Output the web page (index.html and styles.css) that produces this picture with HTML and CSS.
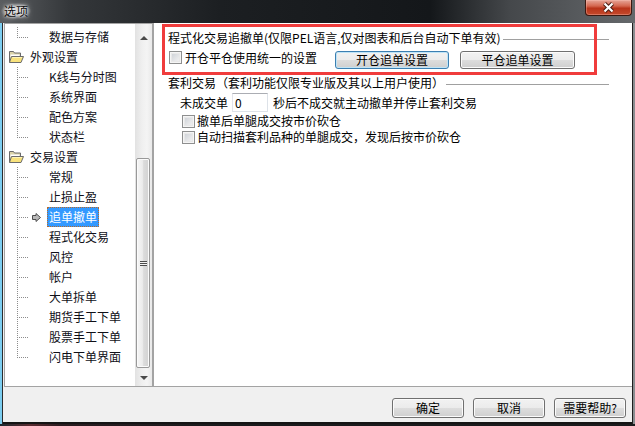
FILE: index.html
```html
<!DOCTYPE html>
<html lang="zh-CN">
<head>
    <meta charset="UTF-8">
    <meta name="viewport" content="width=device-width, initial-scale=1.0">
    <title>选项</title>
    <link rel="stylesheet" href="styles.css">
</head>
<body>
    <div class="window">
        <div class="titlebar">
            <span class="title">选项</span>
            <span class="close">
                <svg width="13" height="11" viewBox="0 0 13 11">
                    <path d="M2.5 1.5 L10.5 9.5 M10.5 1.5 L2.5 9.5" stroke="#4a1c12" stroke-width="4.2"/>
                    <path d="M2.5 1.5 L10.5 9.5 M10.5 1.5 L2.5 9.5" stroke="#fff" stroke-width="2.2"/>
                </svg>
            </span>
        </div>

        <div class="frame">
            <div class="main">
                <div class="tree">
                    <ul class="nodes">
                        <li class="node child"><span class="conn last"></span><span class="slot"></span><span class="label">数据与存储</span></li>
                        <li class="node parent">
                            <svg class="folder" viewBox="0 0 16 16" width="16" height="16">
                                <path d="M1.5 2.5h4l1 1.5h6v9h-11z" fill="#d9d2a8" stroke="#6b6b6b"/>
                                <path d="M2.5 5.5h9v3h-9z" fill="#fff"/>
                                <path d="M3.5 7.5h12l-2.5 6h-11.5z" fill="#f8e27c" stroke="#6b6b6b"/>
                                <path d="M4.5 8.5h9.5" stroke="#fdf3b8"/>
                            </svg>
                            <span class="label">外观设置</span>
                        </li>
                        <li class="node child"><span class="conn"></span><span class="slot"></span><span class="label">K线与分时图</span></li>
                        <li class="node child"><span class="conn"></span><span class="slot"></span><span class="label">系统界面</span></li>
                        <li class="node child"><span class="conn"></span><span class="slot"></span><span class="label">配色方案</span></li>
                        <li class="node child"><span class="conn last"></span><span class="slot"></span><span class="label">状态栏</span></li>
                        <li class="node parent">
                            <svg class="folder" viewBox="0 0 16 16" width="16" height="16">
                                <path d="M1.5 2.5h4l1 1.5h6v9h-11z" fill="#d9d2a8" stroke="#6b6b6b"/>
                                <path d="M2.5 5.5h9v3h-9z" fill="#fff"/>
                                <path d="M3.5 7.5h12l-2.5 6h-11.5z" fill="#f8e27c" stroke="#6b6b6b"/>
                                <path d="M4.5 8.5h9.5" stroke="#fdf3b8"/>
                            </svg>
                            <span class="label">交易设置</span>
                        </li>
                        <li class="node child"><span class="conn"></span><span class="slot"></span><span class="label">常规</span></li>
                        <li class="node child"><span class="conn"></span><span class="slot"></span><span class="label">止损止盈</span></li>
                        <li class="node child selected">
                            <span class="conn"></span>
                            <span class="slot">
                                <svg width="9" height="9" viewBox="0 0 9 9">
                                    <path d="M0.5 2.5h3.5v-2l4.5 4-4.5 4v-2h-3.5z" fill="#b9b9b9" stroke="#4d4d4d"/>
                                </svg>
                            </span>
                            <span class="label">追单撤单</span>
                        </li>
                        <li class="node child"><span class="conn"></span><span class="slot"></span><span class="label">程式化交易</span></li>
                        <li class="node child"><span class="conn"></span><span class="slot"></span><span class="label">风控</span></li>
                        <li class="node child"><span class="conn"></span><span class="slot"></span><span class="label">帐户</span></li>
                        <li class="node child"><span class="conn"></span><span class="slot"></span><span class="label">大单拆单</span></li>
                        <li class="node child"><span class="conn"></span><span class="slot"></span><span class="label">期货手工下单</span></li>
                        <li class="node child"><span class="conn"></span><span class="slot"></span><span class="label">股票手工下单</span></li>
                        <li class="node child"><span class="conn last"></span><span class="slot"></span><span class="label">闪电下单界面</span></li>
                    </ul>
                    <div class="vscroll">
                        <div class="sb-up"><span class="tri up"></span></div>
                        <div class="sb-track">
                            <div class="sb-thumb"><span class="grip"></span></div>
                        </div>
                        <div class="sb-down"><span class="tri down"></span></div>
                    </div>
                </div>

                <div class="panel">
                    <div class="group-title">
                        <span>程式化交易追撤单(仅限PEL语言,仅对图表和后台自动下单有效)</span>
                        <i class="rule"></i>
                    </div>
                    <div class="sync-row">
                        <span class="check"></span>
                        <span class="check-text">开仓平仓使用统一的设置</span>
                        <button class="btn focused open-btn">开仓追单设置</button>
                        <button class="btn close-btn">平仓追单设置</button>
                    </div>

                    <div class="group-title second">
                        <span>套利交易（套利功能仅限专业版及其以上用户使用）</span>
                        <i class="rule"></i>
                    </div>
                    <div class="wait-row">
                        <span>未成交单</span>
                        <input class="num" type="text" value="0">
                        <span class="after">秒后不成交就主动撤单并停止套利交易</span>
                    </div>
                    <div class="opt first">
                        <span class="check"></span>
                        <span class="opt-text">撤单后单腿成交按市价砍仓</span>
                    </div>
                    <div class="opt">
                        <span class="check"></span>
                        <span class="opt-text">自动扫描套利品种的单腿成交，发现后按市价砍仓</span>
                    </div>

                    <div class="mark"></div>
                </div>
            </div>

            <div class="footer">
                <button class="btn">确定</button>
                <button class="btn">取消</button>
                <button class="btn">需要帮助?</button>
            </div>
        </div>
    </div>
</body>
</html>
```

FILE: styles.css
```css
* {
    box-sizing: border-box;
}

html,
body {
    margin: 0;
}

body {
    width: 635px;
    height: 426px;
    overflow: hidden;
    background: linear-gradient(to right, #1c2a30 0, #5a2a30 30px, #2a1c20 60px, #1b1b1d 200px);
    font-family: "Noto Sans CJK SC", "Liberation Sans", sans-serif;
    font-size: 12px;
    line-height: 16px;
    color: #000;
}

.window {
    width: 635px;
    height: 424px;
    display: flex;
    flex-direction: column;
}

/* title bar */
.titlebar {
    height: 23px;
    flex: none;
    display: flex;
    justify-content: space-between;
    align-items: flex-start;
    background: linear-gradient(to right, #5a5d60 0, #34373a 70px, #1c1f22 220px, #14171a 430px, #45484b 510px, #65686b 100%);
}

.title {
    margin: 3px 0 0 1px;
    padding: 0 3px;
    line-height: 16px;
    color: #0c0c0c;
    background: radial-gradient(ellipse at center, rgba(230, 230, 230, 0.75) 30%, rgba(200, 200, 200, 0) 72%);
    text-shadow: 0 0 3px #fff, 0 0 6px #fff;
}

.close {
    width: 47px;
    height: 16px;
    margin-right: 3px;
    display: flex;
    justify-content: center;
    align-items: center;
    border: 1px solid #3c1810;
    border-top: none;
    border-radius: 0 0 4px 4px;
    background: linear-gradient(#e6a698 0, #d4674f 40%, #b8341a 55%, #c44a2c 100%);
    box-shadow: inset 0 0 0 1px rgba(255, 200, 190, 0.35);
}

/* dialog body */
.frame {
    flex: 1;
    display: flex;
    flex-direction: column;
    padding: 0 3px 2px 3px;
    background: #f0f0f0;
    box-shadow: inset 2px 0 #7ccdf0, inset 3px 0 #2a2c2e, inset -2px 0 #8a8d90, inset -3px 0 #1e1e1e, inset 0 -2px #151515;
}

.main {
    height: 364px;
    display: flex;
}

/* tree */
.tree {
    width: 149px;
    margin-left: 1px;
    display: flex;
    border: 1px solid #a3a3a3;
    background: #fff;
}

.nodes {
    flex: 1;
    list-style: none;
    margin: 0;
    padding: 3px 0 0;
    overflow: hidden;
}

.node {
    height: 20px;
    display: flex;
    align-items: center;
    white-space: nowrap;
}

.parent {
    padding-left: 3px;
}

.folder {
    flex: none;
    margin-right: 4px;
}

.conn {
    flex: none;
    width: 12px;
    height: 20px;
    margin-left: 12px;
    background:
        repeating-linear-gradient(to right, #8c8c8c 0 1px, transparent 1px 2px) 0 10px / 12px 1px no-repeat,
        repeating-linear-gradient(to bottom, #8c8c8c 0 1px, transparent 1px 2px) 0 0 / 1px 20px no-repeat;
}

.conn.last {
    background:
        repeating-linear-gradient(to right, #8c8c8c 0 1px, transparent 1px 2px) 0 10px / 12px 1px no-repeat,
        repeating-linear-gradient(to bottom, #8c8c8c 0 1px, transparent 1px 2px) 0 0 / 1px 11px no-repeat;
}

.slot {
    flex: none;
    width: 18px;
    height: 20px;
    display: flex;
    align-items: center;
    padding-left: 3px;
}

.label {
    height: 20px;
    line-height: 18px;
    padding: 0 1px;
    border: 1px solid transparent;
    color: #101018;
}

.selected .label {
    background: #3399ff;
    color: #fff;
    border: 1px dotted #b86a2a;
}

/* scrollbar */
.vscroll {
    width: 17px;
    flex: none;
    display: flex;
    flex-direction: column;
    background: linear-gradient(to right, #e2e2e2 0, #efefef 40%, #f4f4f4 70%, #e9e9e9 100%);
}

.sb-up {
    height: 24px;
    display: flex;
    justify-content: center;
    align-items: center;
    padding-top: 3px;
}

.sb-down {
    height: 17px;
    display: flex;
    justify-content: center;
    align-items: center;
}

.sb-track {
    flex: 1;
    display: flex;
    flex-direction: column;
    justify-content: flex-end;
    padding-bottom: 1px;
}

.sb-thumb {
    height: 210px;
    margin: 0 2px 0 1px;
    display: flex;
    justify-content: center;
    align-items: center;
    border: 1px solid #999;
    border-radius: 2px;
    background: linear-gradient(to right, #f6f6f6 0, #ececec 45%, #dcdcdc 55%, #d2d2d2 100%);
    box-shadow: inset 0 0 0 1px #fbfbfb;
}

.grip {
    width: 7px;
    height: 5px;
    background: repeating-linear-gradient(to bottom, #4c4c4c 0 1px, #f4f4f4 1px 2px);
}

.tri {
    width: 0;
    height: 0;
    border-left: 4px solid transparent;
    border-right: 4px solid transparent;
}

.tri.up {
    border-bottom: 4px solid #4a4a4a;
}

.tri.down {
    border-top: 4px solid #4a4a4a;
}

/* right panel */
.panel {
    flex: 1;
    position: relative;
    padding: 7px 23px 0 14px;
    border-left: 1px solid #a3a3a3;
    border-bottom: 1px solid #a3a3a3;
    background: #fff;
}

.group-title {
    height: 16px;
    display: flex;
    align-items: center;
    white-space: nowrap;
}

.group-title.second {
    margin-top: 6px;
}

.rule {
    flex: 1;
    height: 1px;
    margin: 2px 0 0 2px;
    background: #a0a0a0;
}

.check {
    flex: none;
    width: 13px;
    height: 13px;
    border: 1px solid #8e8f8f;
    background: linear-gradient(135deg, #c7ccd2 0, #e6e7e9 60%, #f6f6f6 100%);
    box-shadow: inset 0 0 0 1px #f5f5f5, inset 0 0 0 2px #e8e8e8;
}

.sync-row {
    height: 18px;
    margin-top: 5px;
    display: flex;
    align-items: flex-start;
}

.sync-row .check {
    margin-left: 1px;
}

.check-text {
    width: 150px;
    margin: -1px 0 0 3px;
    white-space: nowrap;
}

.btn {
    height: 20px;
    padding: 0;
    font-family: inherit;
    font-size: 12px;
    line-height: 16px;
    color: #000;
    border: 1px solid #707070;
    border-radius: 3px;
    background: linear-gradient(#f2f2f2 0, #ebebeb 50%, #dddddd 50%, #cfcfcf 100%);
    box-shadow: inset 0 0 0 1px #fbfbfb;
}

.btn.focused {
    border-color: #3c7fb1;
    box-shadow: inset 0 0 0 1px #bfe4f7;
}

.open-btn {
    width: 114px;
    height: 18px;
}

.close-btn {
    width: 115px;
    height: 18px;
    margin-left: 11px;
}

.wait-row {
    height: 19px;
    margin-top: 2px;
    padding-left: 12px;
    display: flex;
    align-items: center;
    white-space: nowrap;
}

.num {
    width: 36px;
    height: 19px;
    margin-left: 4px;
    padding: 0 2px;
    font-family: inherit;
    font-size: 12px;
    border: 1px solid #dde2e8;
    border-top-color: #abadb3;
    border-left-color: #e2e3ea;
    outline: none;
}

.after {
    margin-left: 5px;
}

.opt {
    height: 16px;
    padding-left: 14px;
    display: flex;
    align-items: center;
    white-space: nowrap;
}

.opt.first {
    margin-top: 1px;
}

.opt-text {
    margin-left: 2px;
}

/* red annotation over the first group */
.mark {
    position: absolute;
    left: 8px;
    top: 1px;
    width: 435px;
    height: 51px;
    border: 3px solid #f03c3c;
    pointer-events: none;
}

/* footer */
.footer {
    flex: 1;
    display: flex;
    justify-content: flex-end;
    gap: 9px;
    padding: 11px 6px 0 0;
}

.footer .btn {
    width: 72px;
}
```
